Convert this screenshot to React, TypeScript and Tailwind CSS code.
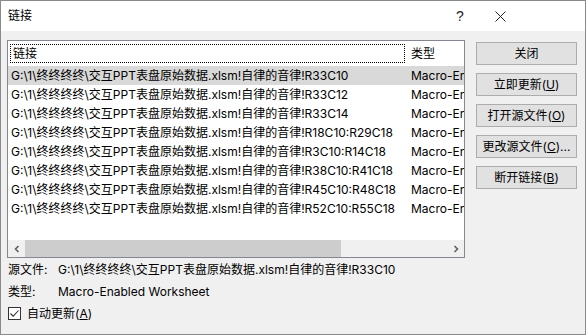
import React from "react";

const rows = [
  "R33C10",
  "R33C12",
  "R33C14",
  "R18C10:R29C18",
  "R3C10:R14C18",
  "R38C10:R41C18",
  "R45C10:R48C18",
  "R52C10:R55C18",
];

const prefix = "G:\\1\\终终终终\\交互PPT表盘原始数据.xlsm!自律的音律!";

function Btn({ children }: { children: React.ReactNode }) {
  return (
    <div className="w-[101px] h-[23px] border border-[#adadad] bg-[#e1e1e1] flex items-center justify-center text-[12px] leading-none text-black whitespace-nowrap">
      {children}
    </div>
  );
}

export default function App() {
  return (
    <div
      className="w-[586px] h-[335px] bg-[#f0f0f0] border border-[#8a8a8a] flex flex-col text-black text-[12px] overflow-hidden"
      style={{ fontFamily: '"Inter", "Noto Sans CJK SC", sans-serif' }}
    >
      {/* Title bar */}
      <div className="h-[30px] bg-white flex items-center shrink-0">
        <div className="pl-[7px] text-[12px] flex-1">链接</div>
        <div className="w-[40px] text-[14px] text-center text-[#222]" style={{ fontFamily: '"Liberation Sans", sans-serif' }}>?</div>
        <div className="w-[40px] flex items-center justify-center mr-[65px]">
          <svg width="11" height="11" viewBox="0 0 11 11">
            <path d="M0.5 0.5 L10.5 10.5 M10.5 0.5 L0.5 10.5" stroke="#222" strokeWidth="1" />
          </svg>
        </div>
      </div>

      {/* Body */}
      <div className="flex pl-[6px] pt-[9px]">
        {/* List box */}
        <div className="w-[458px] h-[218px] border border-[#828790] bg-white flex flex-col">
          <div className="h-[25px] flex items-center shrink-0">
            <div className="ml-[2px] w-[395px] h-[19px] border border-dotted border-black flex items-center pl-[2px] leading-none">
              链接
            </div>
            <div className="pl-[6px] leading-none">类型</div>
          </div>
          <div className="flex-1 flex flex-col">
            {rows.map((r, i) => (
              <div
                key={i}
                className={`h-[19px] flex items-center whitespace-nowrap overflow-hidden leading-none ${i === 0 ? "bg-[#d9d9d9]" : ""}`}
              >
                <div className="w-[400px] pl-[3px] shrink-0">{prefix + r}</div>
                <div className="pl-[3px]">Macro-Enabled Worksheet</div>
              </div>
            ))}
          </div>
          {/* Horizontal scrollbar */}
          <div className="h-[17px] bg-[#f0f0f0] flex items-center shrink-0">
            <div className="w-[17px] h-full flex items-center justify-center">
              <svg width="8" height="8" viewBox="0 0 8 8">
                <path d="M5.5 1 L2.5 4 L5.5 7" stroke="#606060" strokeWidth="1.6" fill="none" />
              </svg>
            </div>
            <div className="flex-1 h-full flex">
              <div className="w-[316px] h-full bg-[#cdcdcd]" />
            </div>
            <div className="w-[17px] h-full flex items-center justify-center">
              <svg width="8" height="8" viewBox="0 0 8 8">
                <path d="M2.5 1 L5.5 4 L2.5 7" stroke="#606060" strokeWidth="1.6" fill="none" />
              </svg>
            </div>
          </div>
        </div>

        {/* Buttons */}
        <div className="ml-[11px] pt-[2px] flex flex-col gap-[8px]">
          <Btn>关闭</Btn>
          <Btn>
            立即更新(<span className="underline">U</span>)
          </Btn>
          <Btn>
            打开源文件(<span className="underline">O</span>)
          </Btn>
          <Btn>
            更改源文件(<span className="underline">C</span>)...
          </Btn>
          <Btn>
            断开链接(<span className="underline">B</span>)
          </Btn>
        </div>
      </div>

      {/* Bottom info */}
      <div className="pl-[7px] pt-[1px] flex flex-col">
        <div className="h-[22px] flex items-center whitespace-nowrap leading-none">
          <div className="w-[50px]">源文件:</div>
          <div>{prefix + "R33C10"}</div>
        </div>
        <div className="h-[22px] flex items-center whitespace-nowrap leading-none">
          <div className="w-[50px]">类型:</div>
          <div>Macro-Enabled Worksheet</div>
        </div>
        <div className="h-[21px] flex items-center leading-none">
          <div className="w-[13px] h-[13px] border border-[#333] bg-white flex items-center justify-center">
            <svg width="11" height="11" viewBox="0 0 11 11">
              <path d="M1.5 5.5 L4.2 8.2 L9.5 2.5" stroke="#333" strokeWidth="1.1" fill="none" />
            </svg>
          </div>
          <div className="pl-[6px]">
            自动更新(<span className="underline">A</span>)
          </div>
        </div>
      </div>
    </div>
  );
}
